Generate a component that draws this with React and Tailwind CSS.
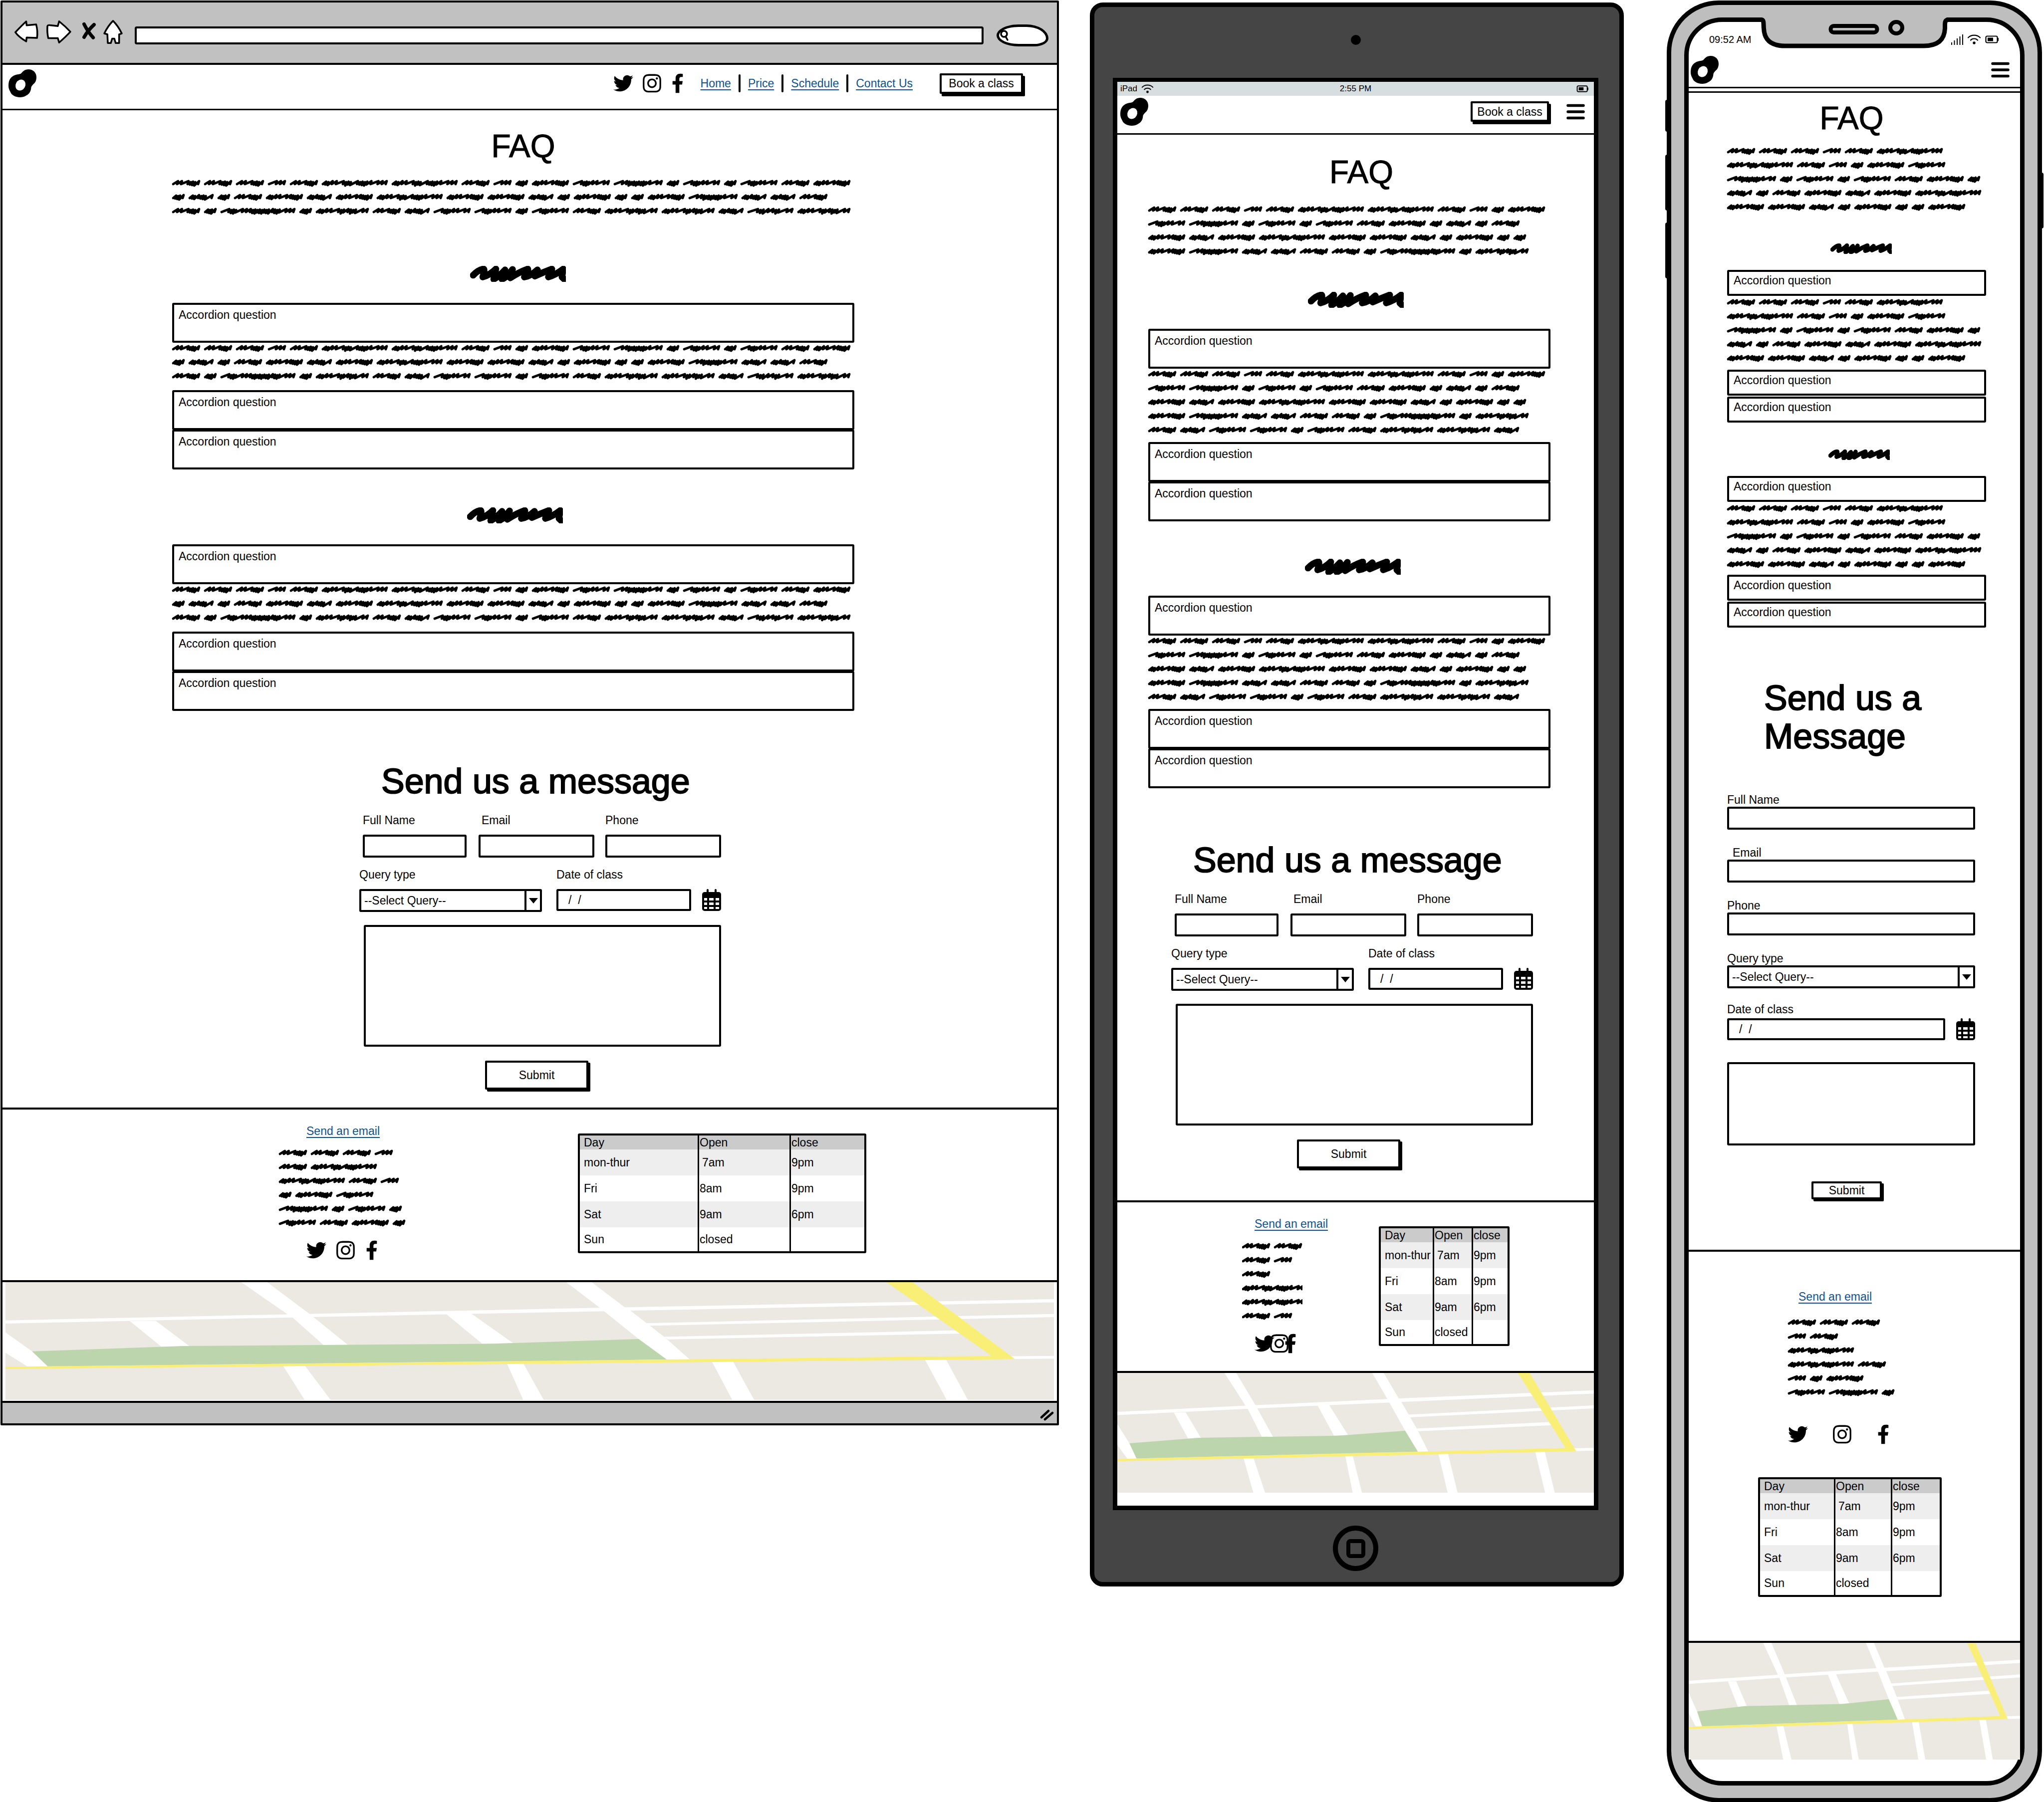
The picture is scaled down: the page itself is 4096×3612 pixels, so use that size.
import React, { useId } from "react";
import { FaTwitter, FaInstagram, FaFacebookF } from "react-icons/fa";

/* ---------- Scribbled placeholder copy ---------- */

// Each word is a run of pen strokes: s = short, w = wide, l = long.
const WORDS = {
  A: { width: 56, strokes: "wwlsssw" },
  B: { width: 36, strokes: "lww" },
  C: { width: 132, strokes: "sswwlssslsssswlww" },
  D: { width: 25, strokes: "sssw" },
  E: { width: 50, strokes: "sswsssl" },
  F: { width: 74, strokes: "sswwlwsssw" },
  f: { width: 74, strokes: "lssswwlw" },
  G: { width: 150, strokes: "lssslwwsssssssswssslww" },
  H: { width: 106, strokes: "sswwlsswssslw" },
  I: { width: 98, strokes: "lwsssssssswlw" },
  J: { width: 92, strokes: "lsswwsslw" },
};

const COPY = "AAABACCABDFfIDfDfAFDEDAFEFCFFEDFDDFIEEAADGDHAEffDfAHHEJH";

const STEP = { s: 4, w: 7, l: 12 };

function strokePath({ width, strokes }) {
  const total = [...strokes].reduce((sum, k) => sum + STEP[k], 0);
  const ratio = (width - 6) / total;
  let x = 2;
  let d = "M2 8";
  [...strokes].forEach((k, i) => {
    x += STEP[k] * ratio;
    const peak = k === "s" ? 3 + (i % 2) : 2;
    const trough = k === "s" ? 9 + (i % 3) : 8;
    d += `L${(x + 2).toFixed(1)} ${peak}L${x.toFixed(1)} ${trough}`;
  });
  return d;
}

function Word({ kind }) {
  const word = WORDS[kind];
  return (
    <svg
      aria-hidden="true"
      viewBox={`0 0 ${word.width} 12`}
      style={{ width: word.width }}
      className="h-3 shrink-0 overflow-visible"
    >
      <path
        d={strokePath(word)}
        fill="none"
        stroke="#000"
        strokeWidth="4.8"
        strokeLinecap="round"
        strokeLinejoin="round"
      />
    </svg>
  );
}

function Copy({ words = COPY.length, className = "" }) {
  return (
    <div className={`flex flex-wrap gap-x-2 gap-y-4 ${className}`}>
      {[...COPY.slice(0, words)].map((kind, i) => (
        <Word key={i} kind={kind} />
      ))}
    </div>
  );
}

function ScribbleTitle({ className = "" }) {
  return (
    <svg aria-hidden="true" viewBox="0 0 219 36" preserveAspectRatio="none" className={className}>
      <path
        d="M7 21Q20 8 31 7Q34 8 29 25Q46 20 59 7L54 30Q66 24 80 9L73 30Q86 24 97 8L92 27Q112 14 132 7Q134 9 124 25Q140 22 154 9L148 23Q168 14 187 7L179 25Q196 20 213 7L210 25L222 36"
        fill="none"
        stroke="#000"
        strokeWidth="15"
        strokeLinecap="round"
        strokeLinejoin="round"
      />
    </svg>
  );
}

/* ---------- Icons ---------- */

function Logo() {
  return (
    <svg role="img" aria-label="Logo" viewBox="0 0 64 64" className="size-14 shrink-0">
      <path d="M45.6 0C57 0 64 8 64 18C64 24 62 29 60 31C56 35 53 37 52 41C51.5 50 48 56 40.5 60C36 63 31 64 26.4 64C20 64 16 62.5 12.4 60.6C8 58 5.5 55 4 51C1 46 0 42 0 37.5C0 31 1 26 4 21.5C7 17 10 15 15 13C20 11 25 11.5 28 10C31 7.5 32 5.5 35 3.4C38 1 42 0 45.6 0Z" />
      <ellipse cx="27.5" cy="36" rx="11" ry="13" transform="rotate(28 27.5 36)" fill="#fff" />
    </svg>
  );
}

function MenuIcon() {
  return (
    <button type="button" aria-label="Menu" className="shrink-0">
      <svg viewBox="0 0 37 32" className="h-8 w-[37px]" stroke="#000" strokeWidth="5.5" strokeLinecap="round">
        <path d="M3 3.5H34M3 16H34M3 28.5H34" />
      </svg>
    </button>
  );
}

function CalendarIcon() {
  return (
    <svg viewBox="0 0 38 44" className="h-11 w-[38px]">
      <path d="M11 2V10M27 2V10" stroke="#000" strokeWidth="4" strokeLinecap="round" />
      <rect x="0" y="6" width="38" height="38" rx="5" />
      <path
        d="M4 18h6v5H4zM14 18h9v5h-9zM27 18h7v5h-7zM4 27h6v5H4zM14 27h9v5h-9zM27 27h7v5h-7zM4 36h6v4H4zM14 36h9v4h-9zM27 36h7v4h-7z"
        fill="#fff"
      />
    </svg>
  );
}

function WifiIcon({ className }) {
  return (
    <svg aria-hidden="true" viewBox="0 0 28 20" className={className} fill="none" stroke="#000" strokeWidth="2.2" strokeLinecap="round">
      <path d="M2 6.5C8 0 20 0 26 6.5M7 11.5C10 7.5 18 7.5 21 11.5" />
      <circle cx="14" cy="17" r="1.6" fill="#000" />
    </svg>
  );
}

function BatteryIcon({ className }) {
  return (
    <svg aria-hidden="true" viewBox="0 0 28 16" className={className}>
      <rect x="1.5" y="1.5" width="23" height="13" rx="2.5" fill="none" stroke="#000" strokeWidth="2.2" />
      <path d="M26 5v6" stroke="#000" strokeWidth="2" />
      <rect x="5" y="4.5" width="11" height="7" />
    </svg>
  );
}

function SocialLinks({ second, third, className = "" }) {
  return (
    <div className={`flex h-[42px] items-center ${className}`}>
      <a href="#twitter" aria-label="Twitter">
        <FaTwitter className="size-10" />
      </a>
      <a href="#instagram" aria-label="Instagram" className={second}>
        <FaInstagram className="h-[42px] w-[37px]" />
      </a>
      <a href="#facebook" aria-label="Facebook" className={third}>
        <FaFacebookF className="h-[42px] w-6" />
      </a>
    </div>
  );
}

/* ---------- Shared pieces ---------- */

function SketchButton({ children, className = "" }) {
  return (
    <button
      type="button"
      className={`flex items-center justify-center rounded-[2px] border-4 border-black bg-white whitespace-nowrap ${className}`}
    >
      {children}
    </button>
  );
}

function Question({ compact, className = "" }) {
  return (
    <button
      type="button"
      className={`block w-full rounded-[3px] border-4 border-black bg-white pl-[9px] text-left ${
        compact ? "pt-[3px] pb-[13px]" : "pt-1.5 pb-[38px]"
      } ${className}`}
    >
      Accordion question
    </button>
  );
}

function FaqSection({ compact, words, titleClass, answerClass }) {
  return (
    <section>
      <ScribbleTitle className={titleClass} />
      <Question compact={compact} />
      <Copy words={words} className={answerClass} />
      <Question compact={compact} />
      <Question compact={compact} className={compact ? "mt-0.5" : "-mt-px"} />
    </section>
  );
}

function TextField({ label, className = "", labelClass = "", inputClass = "" }) {
  const id = useId();
  return (
    <div className={className}>
      <label htmlFor={id} className={`block ${labelClass}`}>
        {label}
      </label>
      <input id={id} type="text" className={`block h-[46px] w-full rounded-[3px] border-4 border-black px-2 ${inputClass}`} />
    </div>
  );
}

function QueryField({ className = "", boxClass = "" }) {
  const id = useId();
  return (
    <div className={className}>
      <label htmlFor={id} className="block">
        Query type
      </label>
      <div className={`flex h-[46px] rounded-[3px] border-4 border-black ${boxClass}`}>
        <select id={id} className="min-w-0 flex-1 appearance-none bg-transparent pl-1.5 outline-none">
          <option>--Select Query--</option>
        </select>
        <span className="pointer-events-none flex w-[31px] items-center justify-center border-l-4 border-black">
          <svg viewBox="0 0 18 11" className="h-[11px] w-[18px]">
            <path d="M0 0H18L9 11Z" />
          </svg>
        </span>
      </div>
    </div>
  );
}

function DateField({ className = "", rowClass = "" }) {
  const id = useId();
  return (
    <div className={className}>
      <label htmlFor={id} className="block">
        Date of class
      </label>
      <div className={`flex items-center ${rowClass}`}>
        <input
          id={id}
          type="text"
          defaultValue="/  /"
          className="h-11 min-w-0 flex-1 rounded-[3px] border-4 border-black pl-5"
        />
        <button type="button" aria-label="Pick a date" className="shrink-0">
          <CalendarIcon />
        </button>
      </div>
    </div>
  );
}

function WideForm({ className = "" }) {
  return (
    <form className={`w-[725px] ${className}`}>
      <h2 className="pl-11 text-[70px] leading-[80px] [-webkit-text-stroke:2px_#000]">Send us a message</h2>
      <div className="mt-6 flex pl-[7px]">
        <TextField label="Full Name" className="w-52" inputClass="mt-[15px]" />
        <TextField label="Email" className="ml-6 w-[232px]" labelClass="pl-1.5" inputClass="mt-[15px]" />
        <TextField label="Phone" className="ml-[22px] w-[232px]" inputClass="mt-[15px]" />
      </div>
      <div className="mt-5 flex justify-between">
        <QueryField className="w-[366px]" boxClass="mt-[15px]" />
        <DateField className="w-[330px]" rowClass="mt-[15px] gap-[22px]" />
      </div>
      <div className="mt-[26px] pl-[9px]">
        <textarea aria-label="Message" className="block h-[244px] w-full resize-none rounded-[3px] border-4 border-black p-2" />
      </div>
      <SketchButton className="mt-7 ml-[252px] h-[58px] w-[207px] shadow-[4px_4px_0_#000]">Submit</SketchButton>
    </form>
  );
}

function NarrowForm({ className = "" }) {
  return (
    <form className={className}>
      <h2 className="pl-[74px] text-[70px] leading-[77px] [-webkit-text-stroke:2px_#000]">
        Send us a<br />
        Message
      </h2>
      <div className="mt-[74px] flex flex-col gap-8">
        <TextField label="Full Name" />
        <TextField label="Email" labelClass="pl-[11px]" />
        <TextField label="Phone" />
        <QueryField />
      </div>
      <DateField className="mt-7" rowClass="mt-1 gap-[22px]" />
      <textarea aria-label="Message" className="mt-11 block h-[167px] w-full resize-none rounded-[3px] border-4 border-black p-2" />
      <SketchButton className="mt-[72px] ml-[169px] h-9 w-[141px] shadow-[4px_4px_0_#000]">Submit</SketchButton>
    </form>
  );
}

const HOURS = [
  ["mon-thur", "7am", "9pm"],
  ["Fri", "8am", "9pm"],
  ["Sat", "9am", "6pm"],
  ["Sun", "closed", ""],
];

function HoursTable({ className = "", dayClass, openClass }) {
  return (
    <table className={`table-fixed border-separate border-spacing-0 rounded-[3px] border-4 border-black text-left ${className}`}>
      <thead>
        <tr className="h-7 bg-[#cbcbcb]">
          <th className={`border-r-[3px] border-black pl-2 font-normal ${dayClass}`}>Day</th>
          <th className={`border-r-[3px] border-black pl-px font-normal ${openClass}`}>Open</th>
          <th className="pl-px font-normal">close</th>
        </tr>
      </thead>
      <tbody>
        {HOURS.map(([day, open, close], i) => (
          <tr key={day} className="h-[52px] odd:bg-[#eee] last:h-12">
            <td className="border-r-[3px] border-black pl-2">{day}</td>
            <td className={`border-r-[3px] border-black ${i === 0 ? "pl-1.5" : "pl-px"}`}>{open}</td>
            <td className="pl-px">{close}</td>
          </tr>
        ))}
      </tbody>
    </table>
  );
}

function EmailLink({ className = "" }) {
  return (
    <a href="#email" className={`block w-fit text-[#0b5394] underline decoration-2 underline-offset-4 ${className}`}>
      Send an email
    </a>
  );
}

function StreetMap({ className = "" }) {
  return (
    <svg role="img" aria-label="Map" viewBox="8 54 1535 810" preserveAspectRatio="none" className={className}>
      <rect x="8" y="54" width="1535" height="810" fill="#ebe9e1" />
      <g fill="#fff">
        <path d="M353 54H391L453 272L510 488H474L429 300L421 275Z" />
        <path d="M829 54H866L915 228L924 254L973 432L1010 587H976L935 445L878 230Z" />
        <path d="M8 317L422 275L878 230L1543 171V193L885 254L455 294L8 339Z" />
        <path d="M190 322L228 320L277 493L236 498Z" />
        <path d="M653 273L690 270L751 473L706 478Z" />
        <path d="M946 336L1543 273V294L946 354Z" />
        <path d="M972 430L1428 383L1436 405L978 448Z" />
        <path d="M8 400L47 530L70 634H40L8 540Z" />
        <path d="M414 626H446L484 864H446Z" />
        <path d="M742 612H766L796 864H766Z" />
        <path d="M1042 598H1073L1104 864H1072Z" />
        <path d="M1354 586H1385L1417 864H1386Z" />
        <path d="M1470 564L1543 561V580L1470 583Z" />
      </g>
      <path d="M47 530L270 493L720 478L935 445L976 586L70 633Z" fill="#bcd5ad" />
      <path d="M1298 54H1336L1486 583L8 651V636L1452 562Z" fill="#f9ee76" />
    </svg>
  );
}

/* ---------- Desktop ---------- */

function BrowserBar() {
  return (
    <div className="flex h-[125px] items-start border-b-4 border-black bg-[#c1c1c1] pr-[17px] pl-6">
      <div className="flex w-[241px] items-start">
        <button type="button" aria-label="Back" className="mt-9">
          <svg viewBox="0 0 54 50" className="h-[44px] w-[47px] overflow-visible" fill="#fff" stroke="#000" strokeWidth="4" strokeLinejoin="round">
            <path d="M2 27Q18 10 27 2L28 11L50 9Q54 24 52 40L28 39L27 48Q10 38 2 27Z" />
          </svg>
        </button>
        <button type="button" aria-label="Forward" className="mt-9 ml-[17px]">
          <svg viewBox="0 0 57 53" className="h-[46px] w-[50px] overflow-visible" fill="#fff" stroke="#000" strokeWidth="4" strokeLinejoin="round">
            <path d="M2 14Q2 10 8 11L26 13L29 2Q44 14 55 26Q44 38 29 51L26 41H4Q1 28 2 14Z" />
          </svg>
        </button>
        <button type="button" aria-label="Stop" className="mt-10 ml-[21px]">
          <svg viewBox="0 0 33 38" className="h-[33px] w-[29px] overflow-visible" stroke="#000" strokeWidth="8" strokeLinecap="round" fill="none">
            <path d="M5 4Q14 22 26 35M28 5Q14 18 5 34" />
          </svg>
        </button>
        <button type="button" aria-label="Home page" className="mt-[35px] ml-[14px]">
          <svg viewBox="0 0 44 55" className="h-[48px] w-[39px] overflow-visible" fill="#fff" stroke="#000" strokeWidth="4" strokeLinejoin="round">
            <path d="M22 2Q34 14 42 31L36 33V53H28L25 43H20L17 53H10L9 33L2 31Q10 14 22 2Z" />
          </svg>
        </button>
      </div>
      <input
        type="text"
        aria-label="Address"
        className="mt-12 h-9 min-w-0 flex-1 rounded-[4px] border-4 border-black bg-white px-2"
      />
      <div className="mt-11 ml-[26px] flex h-11 w-[104px] items-center rounded-[44px_44px_28px_44px/22px_28px_16px_22px] border-[5px] border-black bg-white">
        <svg aria-hidden="true" viewBox="0 0 20 24" className="h-6 w-5 shrink-0" fill="none" stroke="#000" strokeWidth="3.5" strokeLinecap="round">
          <circle cx="10" cy="9" r="6" />
          <path d="M13 14L17 21" />
        </svg>
        <input type="search" aria-label="Search" className="w-12 bg-transparent outline-none" />
      </div>
    </div>
  );
}

function DesktopNav() {
  const links = ["Home", "Price", "Schedule", "Contact Us"];
  return (
    <header className="flex h-[91px] items-center border-b-[3px] border-black pr-[68px] pb-3.5 pl-3">
      <Logo />
      <SocialLinks className="ml-auto" second="ml-[19px]" third="ml-[21px]" />
      <nav className="ml-[34px] flex items-center">
        {links.map((link, i) => (
          <React.Fragment key={link}>
            {i > 0 && <span className="mx-[15px] h-9 w-1 rounded-full bg-black" />}
            <a href="#top" className="text-[#0b5394] underline decoration-2 underline-offset-4">
              {link}
            </a>
          </React.Fragment>
        ))}
      </nav>
      <SketchButton className="ml-[54px] h-[41px] w-[167px] shadow-[4px_5px_0_#000]">Book a class</SketchButton>
    </header>
  );
}

function Desktop() {
  return (
    <div className="mt-px ml-px mr-0.5 rounded-[2px] border-4 border-black bg-white">
      <BrowserBar />
      <DesktopNav />
      <main className="pt-8 pb-9">
        <div className="pr-[406px] pl-[340px]">
          <h1 className="pl-10 text-center text-[64px] leading-[80px] [-webkit-text-stroke:1px_#000]">FAQ</h1>
          <Copy className="mt-7" />
          <FaqSection titleClass="mt-[104px] mb-[42px] ml-[597px] h-8 w-48" answerClass="mt-[5px] mb-[22px]" />
          <FaqSection titleClass="mt-[76px] mb-[42px] ml-[591px] h-8 w-48" answerClass="mt-[5px] mb-[22px]" />
        </div>
        <WideForm className="mt-[101px] ml-[715px]" />
      </main>
      <footer className="flex items-start border-y-4 border-black pb-[39px] pl-[554px]">
        <div className="w-[262px] pt-[29px]">
          <EmailLink className="ml-[55px]" />
          <Copy words={20} className="mt-6" />
          <SocialLinks className="mt-7 ml-[55px]" second="ml-5" third="ml-[22px]" />
        </div>
        <HoursTable className="mt-12 ml-[337px] w-[578px]" dayClass="w-[239px]" openClass="w-[184px]" />
      </footer>
      <div className="px-1.5">
        <StreetMap className="block h-[236px] w-full" />
      </div>
      <div className="mt-0.5 flex h-[45px] justify-end border-t-4 border-black bg-[#c1c1c1] pt-3 pr-1.5">
        <svg aria-hidden="true" viewBox="0 0 28 24" className="h-6 w-7" stroke="#000" strokeWidth="4.5" strokeLinecap="round">
          <path d="M3 17L17 4M10 21L25 8" />
        </svg>
      </div>
    </div>
  );
}

/* ---------- Tablet ---------- */

function Tablet() {
  return (
    <div className="mt-[5px] rounded-[26px] border-[9px] border-black bg-[#454545] pt-14 pr-[42px] pb-[22px] pl-[37px]">
      <div className="mx-auto size-5 rounded-full bg-black" />
      <div className="mt-[66px] border-[9px] border-t-8 border-black bg-white">
        <div className="grid h-7 grid-cols-3 items-center bg-[#d7dee0] px-1.5 text-[17px]">
          <div className="flex items-center gap-2">
            iPad
            <WifiIcon className="h-[18px] w-[25px]" />
          </div>
          <div className="text-center">2:55 PM</div>
          <BatteryIcon className="mr-1 h-[14px] w-[25px] justify-self-end" />
        </div>
        <header className="flex h-[78px] items-center border-b-[3px] border-black pr-[18px] pb-3 pl-1.5">
          <Logo />
          <SketchButton className="mr-[35px] ml-auto h-[41px] w-[157px] shadow-[4px_5px_0_#000]">Book a class</SketchButton>
          <MenuIcon />
        </header>
        <main className="pt-[35px] pb-16">
          <div className="pr-[87px] pl-[62px]">
            <h1 className="pl-12 text-center text-[64px] leading-[80px] [-webkit-text-stroke:1px_#000]">FAQ</h1>
            <Copy words={44} className="mt-[29px]" />
            <FaqSection words={54} titleClass="mt-[75px] mb-[42px] ml-[320px] h-8 w-48" answerClass="mt-[5px] mb-[18px]" />
            <FaqSection words={54} titleClass="mt-[75px] mb-[42px] ml-[314px] h-8 w-48" answerClass="mt-[5px] mb-[18px]" />
          </div>
          <WideForm className="mt-[104px] ml-[108px]" />
        </main>
        <footer className="flex items-start border-y-4 border-black pb-[34px] pl-[250px]">
          <div className="w-[121px] pt-[29px]">
            <EmailLink className="ml-[25px] whitespace-nowrap" />
            <Copy words={9} className="mt-[25px] overflow-x-clip" />
            <SocialLinks className="mt-7 ml-[25px]" second="-ml-[9px]" third="-ml-2" />
          </div>
          <HoursTable className="mt-12 ml-[153px] w-[262px]" dayClass="w-[107px]" openClass="w-[78px]" />
        </footer>
        <StreetMap className="mb-[26px] block h-[240px] w-full" />
      </div>
      <button
        type="button"
        aria-label="Home button"
        className="mx-auto mt-[31px] flex size-[91px] items-center justify-center rounded-full border-[10px] border-black"
      >
        <span className="size-[38px] rounded-lg border-8 border-black" />
      </button>
    </div>
  );
}

/* ---------- Phone ---------- */

function Notch() {
  return (
    <svg
      aria-hidden="true"
      viewBox="0 0 373 62"
      className="absolute -top-[9px] left-1/2 h-[62px] w-[373px] -translate-x-1/2 overflow-visible"
    >
      <rect x="2" y="-1" width="369" height="12" fill="#bebebe" />
      <path
        d="M-6 4.5H0C6 4.5 4 14 5 22C6 44 18 57 48 57H325C355 57 367 44 368 22C368 10 367 4.5 376 4.5"
        fill="#bebebe"
        stroke="#000"
        strokeWidth="9"
      />
      <g fill="none" stroke="#000" strokeWidth="8">
        <rect x="139" y="17" width="93" height="13" rx="6" />
        <ellipse cx="270.5" cy="20.5" rx="12" ry="11.5" />
      </g>
    </svg>
  );
}

function Phone() {
  return (
    <div className="relative mt-px mr-1 ml-0.5 rounded-[104px] border-[9px] border-black bg-[#bebebe] px-[26px] py-[25px]">
      <span className="absolute top-[190px] -left-3 h-16 w-1.5 rounded-l bg-black" />
      <span className="absolute top-[300px] -left-3 h-28 w-1.5 rounded-l bg-black" />
      <span className="absolute top-[436px] -left-3 h-28 w-1.5 rounded-l bg-black" />
      <span className="absolute top-[336px] -right-3 h-28 w-1.5 rounded-r bg-black" />
      <div className="relative rounded-[76px] border-[9px] border-black bg-white pb-[43px]">
        <Notch />
        <div className="flex items-center gap-2 pt-[21px] pr-[42px] pl-[41px] text-[20px]">
          <span className="mr-auto">09:52 AM</span>
          <svg aria-hidden="true" viewBox="0 0 24 22" className="h-[22px] w-6" stroke="#000" strokeWidth="2">
            <path d="M1 22V17M6.5 22V13M12 22V9M17.5 22V5M23 22V1" />
          </svg>
          <WifiIcon className="h-5 w-7" />
          <BatteryIcon className="h-4 w-7" />
        </div>
        <header className="mt-[19px] flex items-center justify-between pr-[21px] pb-1.5 pl-1">
          <Logo />
          <MenuIcon />
        </header>
        <div className="h-3 border-y-[3px] border-black" />
        <main className="pt-[11px] pr-[68px] pb-[101px] pl-[77px]">
          <h1 className="pr-5 text-center text-[64px] leading-[80px] [-webkit-text-stroke:1px_#000]">FAQ</h1>
          <Copy words={35} className="mt-5" />
          <FaqSection compact words={35} titleClass="mt-[67px] mb-8 ml-[207px] h-[21px] w-[123px]" answerClass="mt-[7px] mb-[17px]" />
          <FaqSection compact words={35} titleClass="mt-[54px] mb-8 ml-[203px] h-[21px] w-[123px]" answerClass="mt-[7px] mb-[15px]" />
          <NarrowForm className="mt-[103px] mr-[22px]" />
        </main>
        <footer className="border-y-4 border-black pt-[76px] pb-[88px]">
          <EmailLink className="ml-[220px]" />
          <Copy words={14} className="mt-8 ml-[199px] w-[220px]" />
          <SocialLinks className="mt-[57px] ml-[199px]" second="ml-[50px]" third="ml-[52px]" />
          <HoursTable className="mt-[65px] ml-[139px] w-[368px]" dayClass="w-[151px]" openClass="w-[114px]" />
        </footer>
        <StreetMap className="block h-[234px] w-full" />
      </div>
    </div>
  );
}

export default function App() {
  return (
    <div className="grid w-full grid-cols-[2124fr_1070fr_782fr] items-start gap-x-[60px] bg-white font-['Liberation_Sans',sans-serif] text-[23px] leading-7 text-black">
      <Desktop />
      <Tablet />
      <div className="pl-6">
        <Phone />
      </div>
    </div>
  );
}
